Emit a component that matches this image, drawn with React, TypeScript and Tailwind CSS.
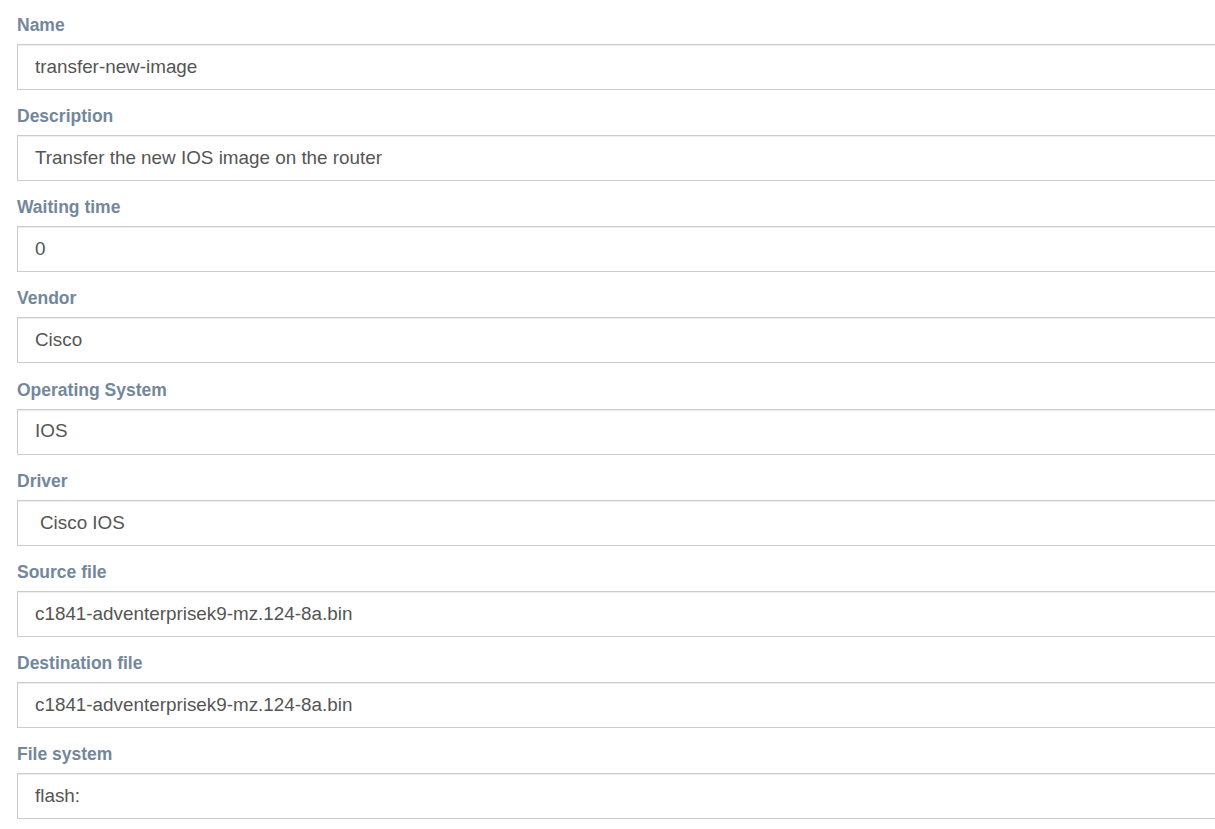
const fields = [
  { label: "Name", value: "transfer-new-image" },
  { label: "Description", value: "Transfer the new IOS image on the router" },
  { label: "Waiting time", value: "0" },
  { label: "Vendor", value: "Cisco" },
  { label: "Operating System", value: "IOS" },
  { label: "Driver", value: "Cisco IOS", select: true },
  { label: "Source file", value: "c1841-adventerprisek9-mz.124-8a.bin" },
  { label: "Destination file", value: "c1841-adventerprisek9-mz.124-8a.bin" },
  { label: "File system", value: "flash:" },
];

const App = () => {
  return (
    <div className="w-[1215px] h-[829px] overflow-hidden bg-white font-['Liberation_Sans',Arial,sans-serif]">
      <div className="pl-[17px] pt-[13px] w-[1240px]">
        {fields.map((f, i) => (
          <div key={i} className="mb-[14.15px]">
            <label className="block text-[17.5px] leading-[25px] font-bold text-[#73879c] mb-[6px]">
              {f.label}
            </label>
            <div
              className={`h-[46px] border border-[#cccccc] shadow-[inset_0_1px_1px_rgba(0,0,0,0.075)] flex items-center text-[18.85px] text-[#555555] ${
                f.select ? "pl-[22px]" : "pl-[17px]"
              }`}
            >
              {f.value}
            </div>
          </div>
        ))}
      </div>
    </div>
  );
};

export default App;
